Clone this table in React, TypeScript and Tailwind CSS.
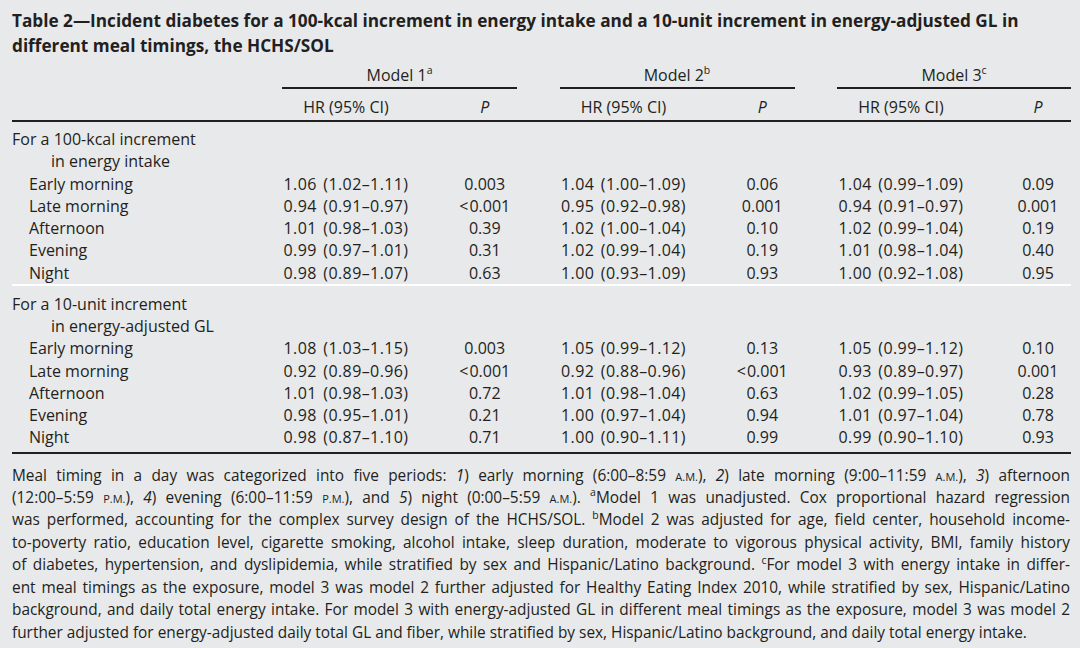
import React from "react"

type Row = [string, string, string, string, string, string, string]

const kcalRows: Row[] = [
  ["Early morning", "1.06 (1.02–1.11)", "0.003", "1.04 (1.00–1.09)", "0.06", "1.04 (0.99–1.09)", "0.09"],
  ["Late morning", "0.94 (0.91–0.97)", "<0.001", "0.95 (0.92–0.98)", "0.001", "0.94 (0.91–0.97)", "0.001"],
  ["Afternoon", "1.01 (0.98–1.03)", "0.39", "1.02 (1.00–1.04)", "0.10", "1.02 (0.99–1.04)", "0.19"],
  ["Evening", "0.99 (0.97–1.01)", "0.31", "1.02 (0.99–1.04)", "0.19", "1.01 (0.98–1.04)", "0.40"],
  ["Night", "0.98 (0.89–1.07)", "0.63", "1.00 (0.93–1.09)", "0.93", "1.00 (0.92–1.08)", "0.95"],
]

const glRows: Row[] = [
  ["Early morning", "1.08 (1.03–1.15)", "0.003", "1.05 (0.99–1.12)", "0.13", "1.05 (0.99–1.12)", "0.10"],
  ["Late morning", "0.92 (0.89–0.96)", "<0.001", "0.92 (0.88–0.96)", "<0.001", "0.93 (0.89–0.97)", "0.001"],
  ["Afternoon", "1.01 (0.98–1.03)", "0.72", "1.01 (0.98–1.04)", "0.63", "1.02 (0.99–1.05)", "0.28"],
  ["Evening", "0.98 (0.95–1.01)", "0.21", "1.00 (0.97–1.04)", "0.94", "1.01 (0.97–1.04)", "0.78"],
  ["Night", "0.98 (0.87–1.10)", "0.71", "1.00 (0.90–1.11)", "0.99", "0.99 (0.90–1.10)", "0.93"],
]

const Sup = ({ children }: { children: React.ReactNode }) => (
  <sup className="text-[10.5px] leading-none -top-[0.65em]">{children}</sup>
)

const SmallCaps = ({ children }: { children: React.ReactNode }) => (
  <span className="text-[11px] leading-none">{children}</span>
)

// P values: "<" set a little apart like the printed table
const PVal = ({ v }: { v: string }) =>
  v.startsWith("<") ? (
    <span>
      &lt;<span className="ml-[1px]">{v.slice(1)}</span>
    </span>
  ) : (
    <span>{v}</span>
  )

const DataRow = ({ row }: { row: Row }) => (
  <div className="grid grid-cols-[270px_128px_149.5px_128px_149.5px_128px_106px] leading-[22.25px]">
    <div className="pl-[17px]">{row[0]}</div>
    <div className="text-center tracking-[0.4px] [word-spacing:2px]">{row[1]}</div>
    <div className="text-center"><PVal v={row[2]} /></div>
    <div className="text-center tracking-[0.4px] [word-spacing:2px]">{row[3]}</div>
    <div className="text-center"><PVal v={row[4]} /></div>
    <div className="text-center tracking-[0.4px] [word-spacing:2px]">{row[5]}</div>
    <div className="pl-[40px] text-center"><PVal v={row[6]} /></div>
  </div>
)

const Section = ({ first, second, rows, top }: { first: string; second: string; rows: Row[]; top: string }) => (
  <div className={top}>
    <div className="leading-[22.25px]">{first}</div>
    <div className="leading-[22.25px] pl-[39px]">{second}</div>
    {rows.map((r) => (
      <DataRow row={r} key={r[0]} />
    ))}
  </div>
)

const Line = ({ children, last }: { children: React.ReactNode; last?: boolean }) => (
  <div className={last ? "text-left" : "text-justify [text-align-last:justify]"}>{children}</div>
)

export default function App() {
  return (
    <div className="w-[1080px] h-[648px] overflow-hidden bg-[#e8e9eb] text-[#231f20] font-['Open_Sans',sans-serif]">
      <h1 className="pt-[8px] px-[12px] text-[17.2px] font-bold leading-[25px] whitespace-nowrap">
        Table 2—Incident diabetes for a 100-kcal increment in energy intake and a 10-unit increment in energy-adjusted GL in
        <br />
        different meal timings, the HCHS/SOL
      </h1>

      <div className="ml-[12px] w-[1059px] text-[16px]">
        <div className="mt-[6px] grid grid-cols-[270px_128px_149.5px_128px_149.5px_128px_106px] leading-[22px]">
          <div />
          <div className="col-span-2">
            <div className="w-[235px] text-center pb-[1px] border-b-2 border-[#231f20]">
              Model 1<Sup>a</Sup>
            </div>
          </div>
          <div className="col-span-2">
            <div className="w-[235px] text-center pb-[1px] border-b-2 border-[#231f20]">
              Model 2<Sup>b</Sup>
            </div>
          </div>
          <div className="col-span-2">
            <div className="w-[234px] text-center pb-[1px] border-b-2 border-[#231f20]">
              Model 3<Sup>c</Sup>
            </div>
          </div>
        </div>

        <div className="mt-[7px] pb-[2px] border-b-2 border-[#231f20] grid grid-cols-[270px_128px_149.5px_128px_149.5px_128px_106px] leading-[22px]">
          <div />
          <div className="text-center">HR (95% CI)</div>
          <div className="text-center italic">P</div>
          <div className="text-center">HR (95% CI)</div>
          <div className="text-center italic">P</div>
          <div className="text-center">HR (95% CI)</div>
          <div className="pl-[40px] text-center italic">P</div>
        </div>

        <div className="border-b-2 border-white">
          <Section top="pt-[6px]" first="For a 100-kcal increment" second="in energy intake" rows={kcalRows} />
        </div>
        <div className="pb-[3px] border-b-2 border-[#231f20]">
          <Section top="pt-[7px]" first="For a 10-unit increment" second="in energy-adjusted GL" rows={glRows} />
        </div>
      </div>

      <div className="mt-[11px] mx-[12px] w-[1058px] text-[15.4px] leading-[22.45px]">
        <Line>
          Meal timing in a day was categorized into five periods: <i>1</i>) early morning (6:00–8:59 <SmallCaps>A.M.</SmallCaps>), <i>2</i>) late morning (9:00–11:59 <SmallCaps>A.M.</SmallCaps>), <i>3</i>) afternoon
        </Line>
        <Line>
          (12:00–5:59 <SmallCaps>P.M.</SmallCaps>), <i>4</i>) evening (6:00–11:59 <SmallCaps>P.M.</SmallCaps>), and <i>5</i>) night (0:00–5:59 <SmallCaps>A.M.</SmallCaps>). <Sup>a</Sup>Model 1 was unadjusted. Cox proportional hazard regression
        </Line>
        <Line>
          was performed, accounting for the complex survey design of the HCHS/SOL. <Sup>b</Sup>Model 2 was adjusted for age, field center, household income-
        </Line>
        <Line>
          to-poverty ratio, education level, cigarette smoking, alcohol intake, sleep duration, moderate to vigorous physical activity, BMI, family history
        </Line>
        <Line>
          of diabetes, hypertension, and dyslipidemia, while stratified by sex and Hispanic/Latino background. <Sup>c</Sup>For model 3 with energy intake in differ-
        </Line>
        <Line>
          ent meal timings as the exposure, model 3 was model 2 further adjusted for Healthy Eating Index 2010, while stratified by sex, Hispanic/Latino
        </Line>
        <Line>
          background, and daily total energy intake. For model 3 with energy-adjusted GL in different meal timings as the exposure, model 3 was model 2
        </Line>
        <Line last>
          further adjusted for energy-adjusted daily total GL and fiber, while stratified by sex, Hispanic/Latino background, and daily total energy intake.
        </Line>
      </div>
    </div>
  )
}
